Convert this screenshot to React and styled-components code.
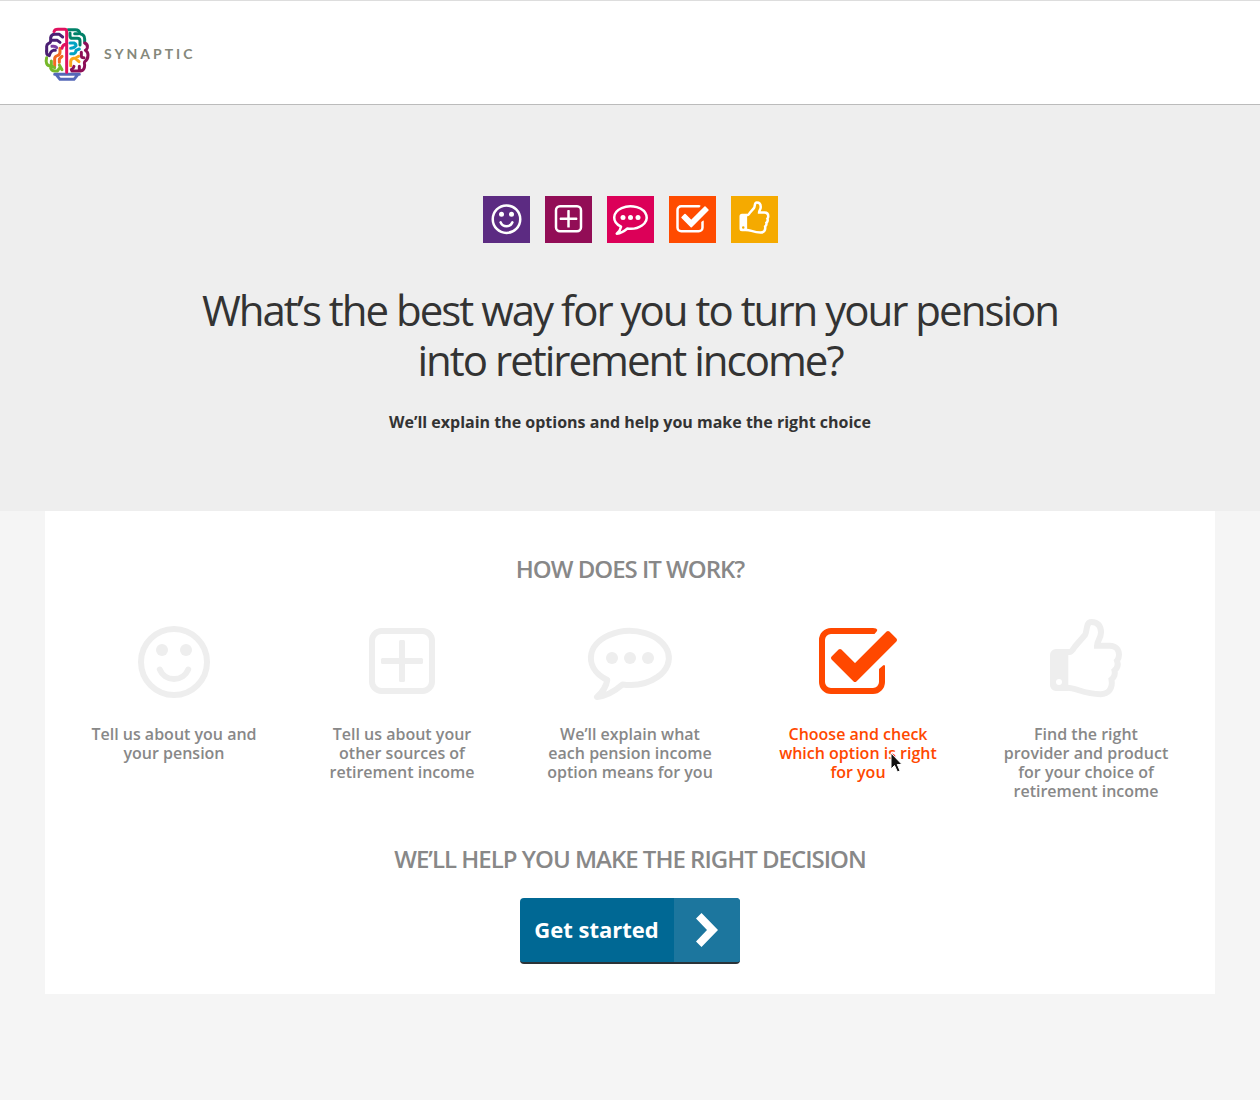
import React from "react";
import styled, { createGlobalStyle } from "styled-components";

const GlobalStyle = createGlobalStyle`
  * {
    box-sizing: border-box;
  }
  body {
    margin: 0;
    background: #f5f5f5;
    color: #333;
    font-family: "Open Sans", "Noto Sans", sans-serif;
    font-size: 16px;
  }
`;

const Header = styled.header`
  display: flex;
  align-items: center;
  height: 105px;
  padding: 2px 44px 0;
  background: #fff;
  border-top: 1px solid #ddd;
  border-bottom: 1px solid #bbb;
`;

const Brand = styled.a`
  display: flex;
  align-items: center;
  gap: 14px;
  color: #85887b;
  text-decoration: none;
`;

const Wordmark = styled.span`
  font-family: Lato, sans-serif;
  font-size: 14px;
  font-weight: 700;
  line-height: 20px;
  letter-spacing: 3px;
`;

const Hero = styled.section`
  padding: 91px 30px 78px;
  background: #eee;
  text-align: center;
`;

const Tiles = styled.div`
  display: flex;
  justify-content: center;
  gap: 15px;
`;

const Tile = styled.span`
  display: flex;
  justify-content: center;
  width: 47px;
  height: 47px;
  padding-top: 4px;
  background: ${(props) => props.$color};
  color: #fff;
`;

const Title = styled.h1`
  max-width: 900px;
  margin: 42px auto 0;
  font-size: 42px;
  font-weight: 400;
  line-height: 50px;
  letter-spacing: -2px;
`;

const Lead = styled.p`
  margin: 26px 0 0;
  font-weight: 700;
  line-height: 22px;
`;

const Card = styled.main`
  max-width: 1170px;
  margin: 0 auto;
  padding: 41px 15px 30px;
  background: #fff;
  text-align: center;
`;

const Heading = styled.h2`
  margin: 0;
  color: #888;
  font-size: 24px;
  font-weight: 600;
  line-height: 34px;
  letter-spacing: -1px;
`;

const Steps = styled.ol`
  display: grid;
  grid-template-columns: repeat(5, 1fr);
  margin: 30px 0 41px;
  padding: 0;
  list-style: none;
`;

const Step = styled.li`
  position: relative;
  padding: 0 30px;
  color: ${(props) => (props.$active ? "#ff4800" : "#888")};

  svg {
    color: ${(props) => (props.$active ? "#ff4800" : "#eee")};
  }
  p {
    margin: 25px 0 0;
    font-weight: 600;
    line-height: 19px;
  }
`;

const Pointer = styled.svg`
  position: absolute;
  top: 136px;
  left: 146px;
`;

const StartButton = styled.button`
  display: inline-flex;
  align-items: stretch;
  height: 66px;
  margin-top: 22px;
  padding: 0;
  overflow: hidden;
  background: #006894;
  border: 0;
  border-bottom: 2px solid #2b3338;
  border-radius: 4px;
  color: #fff;
  font-family: inherit;
  font-size: 22px;
  font-weight: 700;
  line-height: 62px;
  cursor: pointer;
`;

const StartLabel = styled.span`
  padding: 0 15px 0 14px;
`;

const StartArrow = styled.span`
  display: flex;
  align-items: center;
  justify-content: center;
  width: 66px;
  background: #1c769e;
`;

const Icon = ({ size, children }) => (
  <svg
    width={size}
    height={size}
    viewBox="0 0 84 84"
    fill="none"
    stroke="currentColor"
    strokeWidth="6"
    overflow="visible"
    aria-hidden="true"
    display="block"
    style={{ margin: "0 auto", flex: "none" }}
  >
    {children}
  </svg>
);

const Smile = ({ size }) => (
  <Icon size={size}>
    <circle cx="42" cy="46" r="33" />
    <g fill="currentColor" stroke="none">
      <circle cx="30" cy="34" r="6" />
      <circle cx="54" cy="34" r="6" />
    </g>
    <path d="M27.800 53.500C30 59 35.500 63 42 63s12-4 14.200-9.500" strokeLinecap="round" />
  </Icon>
);

const Plus = ({ size }) => (
  <Icon size={size}>
    <rect x="12" y="15" width="60" height="60" rx="9.500" />
    <g fill="currentColor" stroke="none">
      <rect x="39" y="24" width="6" height="42" rx="1.500" />
      <rect x="21" y="42" width="42" height="6" rx="1.500" />
    </g>
  </Icon>
);

const Bubble = ({ size }) => (
  <Icon size={size}>
    <path
      d="M34.500 68.500A39 27 0 1 0 19.300 64C18 71.500 15 75.500 9 81c10-1 18-6 25.500-12.500Z"
      strokeLinejoin="round"
    />
    <g fill="currentColor" stroke="none">
      <circle cx="24" cy="42" r="6" />
      <circle cx="42" cy="42" r="6" />
      <circle cx="60" cy="42" r="6" />
    </g>
  </Icon>
);

const Check = ({ size }) => (
  <Icon size={size}>
    <path
      d="M57 12H15A12 12 0 0 0 3 24v42a12 12 0 0 0 12 12h42a12 12 0 0 0 12-12V50q-.5-1.500-2-.5L63 53v13a6 6 0 0 1-6 6H15a6 6 0 0 1-6-6V24a6 6 0 0 1 6-6h43.500l2.500-3q1-1.500-1-2.500Z"
      fill="currentColor"
      stroke="none"
    />
    <path
      d="M17 42 24 35 39 50 72 17 79 24 39 64Z"
      fill="currentColor"
      strokeWidth="4"
      strokeLinejoin="round"
    />
  </Icon>
);

const Thumb = ({ size }) => (
  <Icon size={size}>
    <path
      d="M24.300 33v42H12a6 6 0 0 1-6-6V39a6 6 0 0 1 6-6ZM15 63a3 3 0 1 0 0 6 3 3 0 0 0 0-6Z"
      fill="currentColor"
      fillRule="evenodd"
      stroke="none"
    />
    <path
      d="M23.500 36h2C28 36 29 33 31 30.500L41 19c2.500-4 .5-13 6.500-13C54 6 57 10 57 16.500c0 6-4 8.500-4 13.200h13c5.500 0 9 4 9 9 0 3-.500 4.300-2 6 1.500 4 .500 7.300-2.500 9.800 1 4 0 6.500-3 9 1.500 9-3 14.700-11 14.700-17 0-24-6.500-33.500-6.500"
    />
  </Icon>
);

const Brain = () => (
  <svg
    width="46"
    height="54"
    viewBox="12 18 138 162"
    fill="none"
    strokeWidth="9"
    strokeLinecap="round"
    strokeLinejoin="round"
    aria-hidden="true"
  >
    <g stroke="#4b1f73">
      <path d="M20 90V76q0-6 6-9 6-2 6-8V50q2-10 12-10h14l10 8" />
      <path d="M34 58h18l8 6" />
      <path d="M20 90v6q0 6 8 8 4-14 12-16h6" />
    </g>
    <path d="M36 76q10-2 14 4" stroke="#7b3fa0" />
    <g stroke="#f26a21">
      <path d="M44 136v-22q0-8 8-10 8-2 8-10V82" />
      <path d="M66 106l-8 8v10" />
    </g>
    <g stroke="#76b82a">
      <path d="M20 110q-3 10 0 18 3 7 12 7v6q3 9 12 9h8l6-8" />
      <path d="M34 120v14l10 6M58 132l8 14" />
    </g>
    <g stroke="#008168">
      <path d="M84 26h22q12 0 14 12 14 2 14 16v8" />
      <path d="M90 36v8q0 8 8 8h14q8 0 8 8v12" />
      <path d="M104 38h10" />
    </g>
    <g stroke="#00a3c4">
      <path d="M90 66h12q6 2 6 8M92 82q10 0 16-8M92 98h10q6-2 6-10l10-4" />
    </g>
    <g stroke="#8c0f57">
      <path d="M134 66q10 4 8 14-2 6-6 8 8 5 8 14 0 14-10 20-2 4 0 10 0 16-12 18H96" />
      <path d="M124 94v10q0 6 8 6M94 146q6-3 8-10M118 148v-12" />
    </g>
    <path d="M92 134v-12q1-9 9-10h5l10-6M106 112l11 10" stroke="#f9a51a" />
    <path d="M44 160h74M48 160l12 15h42l12-15" stroke="#5568b8" />
    <path
      d="M42 32q2-7 12-7h20q6 0 6 7v122M80 70q-12 0-14 12"
      stroke="#e0115f"
    />
  </svg>
);

const steps = [
  { icon: Smile, color: "#5c2b82", text: "Tell us about you and your pension" },
  { icon: Plus, color: "#920d56", text: "Tell us about your other sources of retirement income" },
  { icon: Bubble, color: "#dc0058", text: "We’ll explain what each pension income option means for you" },
  { icon: Check, color: "#ff4b00", text: "Choose and check which option is right for you", active: true },
  { icon: Thumb, color: "#f5aa00", text: "Find the right provider and product for your choice of retirement income" },
];

const App = () => {
  return (
    <>
      <GlobalStyle />
      <Header>
        <Brand href="#">
          <Brain />
          <Wordmark>SYNAPTIC</Wordmark>
        </Brand>
      </Header>
      <Hero>
        <Tiles>
          {steps.map(({ icon: StepIcon, color }) => (
            <Tile key={color} $color={color}>
              <StepIcon size={35} />
            </Tile>
          ))}
        </Tiles>
        <Title>What’s the best way for you to turn your pension into retirement income?</Title>
        <Lead>We’ll explain the options and help you make the right choice</Lead>
      </Hero>
      <Card>
        <Heading>HOW DOES IT WORK?</Heading>
        <Steps>
          {steps.map(({ icon: StepIcon, text, active }) => (
            <Step key={text} $active={active}>
              <StepIcon size={84} />
              <p>{text}</p>
              {active && (
                <Pointer width="14" height="22" viewBox="0 0 14 22" aria-hidden="true">
                  <path
                    d="M1 1v16l3.500-3.500L7.500 20l2.500-1.200L7.300 12.500H12Z"
                    fill="#111"
                    stroke="#fff"
                  />
                </Pointer>
              )}
            </Step>
          ))}
        </Steps>
        <Heading>WE’LL HELP YOU MAKE THE RIGHT DECISION</Heading>
        <StartButton type="button">
          <StartLabel>Get started</StartLabel>
          <StartArrow>
            <svg width="22" height="34" viewBox="0 0 22 34" aria-hidden="true">
              <path d="M5.500 0 22 17 5.500 34 0 28.500 11 17 0 5.500Z" fill="#fff" />
            </svg>
          </StartArrow>
        </StartButton>
      </Card>
    </>
  );
};

export default App;
